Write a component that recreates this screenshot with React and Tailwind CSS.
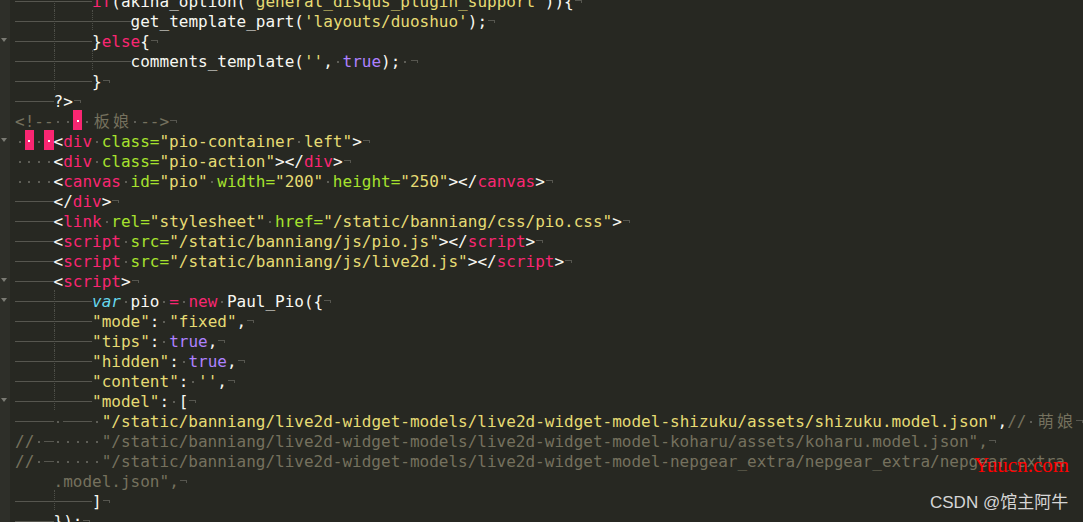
const COL = {
  W: "text-[#f8f8f2]",
  P: "text-[#f92672]",
  G: "text-[#a6e22e]",
  Y: "text-[#e6db74]",
  V: "text-[#ae81ff]",
  C: "text-[#66d9ef] italic",
  M: "text-[#75715e]",
};

const TAB_W = { 1: "w-[1ch]", 2: "w-[2ch]", 3: "w-[3ch]", 4: "w-[4ch]" };

// editor lines, each row is 20px tall
const LINES = [
  { guides: [4], segs: ["\t\t", ["P", "if"], "(akina_option(", ["Y", "'general_disqus_plugin_support'"], ")){"] },
  { guides: [4, 8], segs: ["\t\t\tget_template_part(", ["Y", "'layouts/duoshuo'"], ");"] },
  { guides: [4], fold: true, segs: ["\t\t}", ["P", "else"], "{"] },
  { guides: [4, 8], segs: ["\t\t\tcomments_template(", ["Y", "''"], ", ", ["V", "true"], "); "] },
  { guides: [4], segs: ["\t\t}"] },
  { segs: ["\t?>"] },
  { segs: [["M", "<!--  \u00a0 板娘 -->"]] },
  { fold: true, segs: [" \u00a0 \u00a0<", ["P", "div"], " ", ["G", "class="], ["Y", '"pio-container left"'], ">"] },
  { segs: ["    <", ["P", "div"], " ", ["G", "class="], ["Y", '"pio-action"'], "></", ["P", "div"], ">"] },
  { segs: ["    <", ["P", "canvas"], " ", ["G", "id="], ["Y", '"pio"'], " ", ["G", "width="], ["Y", '"200"'], " ", ["G", "height="], ["Y", '"250"'], "></", ["P", "canvas"], ">"] },
  { segs: ["\t</", ["P", "div"], ">"] },
  { segs: ["\t<", ["P", "link"], " ", ["G", "rel="], ["Y", '"stylesheet"'], " ", ["G", "href="], ["Y", '"/static/banniang/css/pio.css"'], ">"] },
  { segs: ["\t<", ["P", "script"], " ", ["G", "src="], ["Y", '"/static/banniang/js/pio.js"'], "></", ["P", "script"], ">"] },
  { segs: ["\t<", ["P", "script"], " ", ["G", "src="], ["Y", '"/static/banniang/js/live2d.js"'], "></", ["P", "script"], ">"] },
  { fold: true, segs: ["\t<", ["P", "script"], ">"] },
  { guides: [4], fold: true, segs: ["\t\t", ["C", "var"], " pio ", ["P", "="], " ", ["P", "new"], " Paul_Pio({"] },
  { guides: [4], segs: ["\t\t", ["Y", '"mode"'], ": ", ["Y", '"fixed"'], ","] },
  { guides: [4], segs: ["\t\t", ["Y", '"tips"'], ": ", ["V", "true"], ","] },
  { guides: [4], segs: ["\t\t", ["Y", '"hidden"'], ": ", ["V", "true"], ","] },
  { guides: [4], segs: ["\t\t", ["Y", '"content"'], ": ", ["Y", "''"], ","] },
  { guides: [4], fold: true, segs: ["\t\t", ["Y", '"model"'], ": ["] },
  { segs: ["\t \t ", ["Y", '"/static/banniang/live2d-widget-models/live2d-widget-model-shizuku/assets/shizuku.model.json"'], ",", ["M", "// 萌娘"]] },
  { segs: [["M", "// \t     "], ["M", '"/static/banniang/live2d-widget-models/live2d-widget-model-koharu/assets/koharu.model.json",']] },
  { noEol: true, segs: [["M", "// \t     "], ["M", '"/static/banniang/live2d-widget-models/live2d-widget-model-nepgear_extra/nepgear_extra/nepgear_extra']] },
  { wrap: true, segs: [["M", '.model.json",']] },
  { guides: [4], segs: ["\t\t]"] },
  { segs: ["\t});"] },
];

const Tab = ({ w, guide }) => (
  <span
    className={`${TAB_W[w]} h-5 shrink-0 pt-[11px] ${guide ? "border-l border-dotted border-[#4e4f48]" : ""}`}
  >
    <span className="block h-px w-full bg-[#56564f]" />
  </span>
);

const Dot = () => (
  <span className="w-[1ch] h-5 shrink-0 flex justify-center pt-[11px]">
    <span className="block w-[2px] h-[2px] bg-[#5e5e57]" />
  </span>
);

const Pink = () => (
  <span className="w-[1ch] h-5 shrink-0 flex justify-center pt-[10px] bg-[#f92672]">
    <span className="block w-[2px] h-[2px] bg-white" />
  </span>
);

const Eol = () => (
  <span className="w-[1ch] h-5 shrink-0 pt-[10px] pl-[1px]">
    <span className="block w-[7px] h-[3px] border-t border-r border-[#56564f]" />
  </span>
);

function renderSegs(line) {
  let col = 0;
  const out = [];
  let k = 0;
  line.segs.forEach((seg) => {
    const [c, text] = typeof seg === "string" ? ["W", seg] : seg;
    let buf = "";
    const flush = () => {
      if (buf) {
        out.push(
          <span key={k++} className={`${COL[c]} h-5 leading-[23px] whitespace-pre shrink-0`}>
            {buf}
          </span>
        );
        buf = "";
      }
    };
    for (const ch of text) {
      if (ch === "\t") {
        flush();
        const w = 4 - (col % 4);
        out.push(<Tab key={k++} w={w} guide={(line.guides || []).includes(col)} />);
        col += w;
      } else if (ch === " ") {
        flush();
        out.push(<Dot key={k++} />);
        col += 1;
      } else if (ch === "\u00a0") {
        flush();
        out.push(<Pink key={k++} />);
        col += 1;
      } else if (/[\u4e00-\u9fff]/.test(ch)) {
        flush();
        out.push(
          <span key={k++} className={`${COL[c]} w-[2ch] h-5 leading-[23px] text-center shrink-0`}>
            {ch}
          </span>
        );
        col += 2;
      } else {
        buf += ch;
        col += 1;
      }
    }
    flush();
  });
  return out;
}

const Row = ({ line }) => (
  <div className="flex h-5">
    <div className="w-[10px] h-5 shrink-0 bg-[#2e2f29] pt-2 pl-px">
      {line.fold && (
        <span className="block w-0 h-0 border-l-[3px] border-r-[3px] border-t-[4px] border-l-transparent border-r-transparent border-t-[#7b7b74]" />
      )}
    </div>
    <div className="w-[5px] shrink-0" />
    {line.wrap && <span className="w-[4ch] h-5 shrink-0" />}
    {renderSegs(line)}
    {!line.noEol && <Eol />}
  </div>
);

export default function App() {
  return (
    <div className="relative w-[1083px] h-[522px] overflow-hidden bg-[#272822]">
      <div className="-mt-[10px] font-['DejaVu_Sans_Mono','Noto_Sans_CJK_SC',monospace] text-[16px]">
        {LINES.map((line, i) => (
          <Row key={i} line={line} />
        ))}
      </div>

      <div className="absolute left-[974px] top-[455px] font-['Liberation_Serif',serif] text-[21px] leading-none text-[#ff0000] whitespace-nowrap">
        Yuucn.com
      </div>
      <div className="absolute left-[930px] top-[494px] font-['Liberation_Sans','Noto_Sans_CJK_SC',sans-serif] text-[17px] leading-none text-[#d6d6d6] whitespace-nowrap">
        CSDN @馆主阿牛
      </div>
    </div>
  );
}
